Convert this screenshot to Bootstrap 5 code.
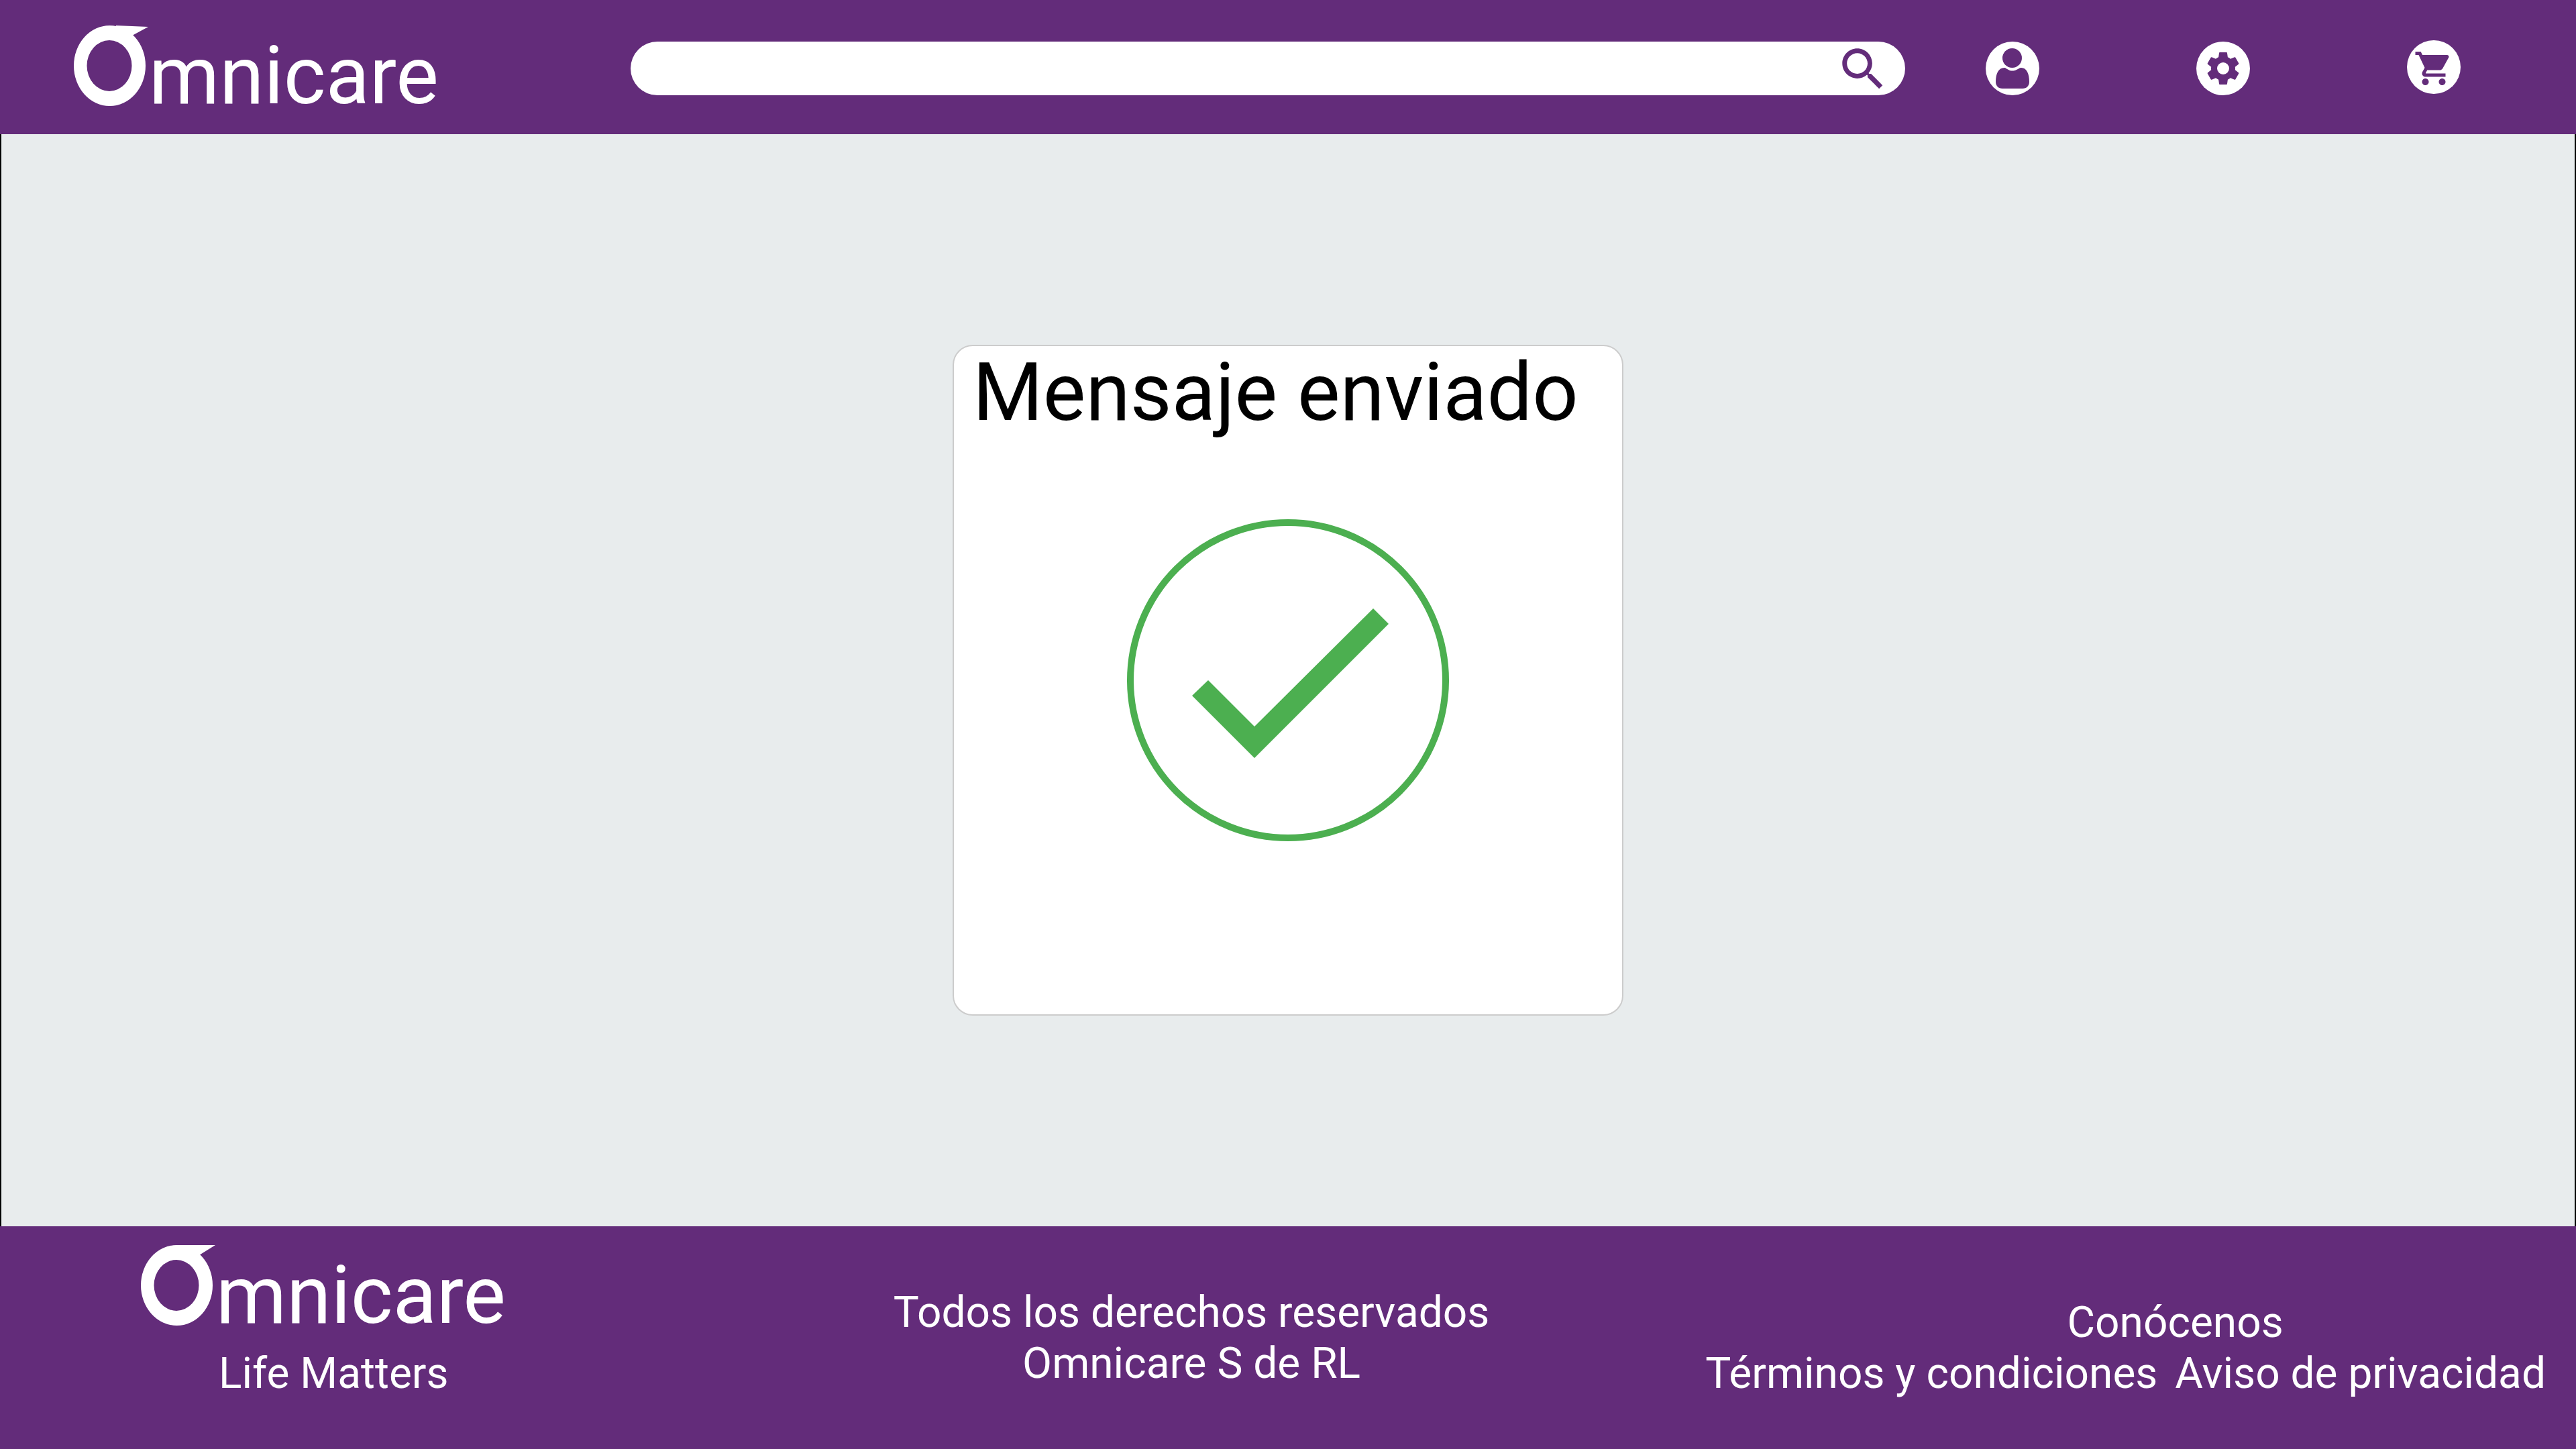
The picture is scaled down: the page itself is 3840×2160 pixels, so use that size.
<!DOCTYPE html>
<html lang="es">
<head>
<meta charset="utf-8">
<meta name="viewport" content="width=device-width, initial-scale=1">
<title>Omnicare - Mensaje enviado</title>
<link rel="stylesheet" href="https://cdn.jsdelivr.net/npm/bootstrap@5.3.0/dist/css/bootstrap.min.css">
<style>
  :root { --omni-purple: #632c7a; --omni-green: #4caf50; }
  body { font-family: Roboto, "Liberation Sans", sans-serif; background: #e8eced; }
  .omni-header { background: var(--omni-purple); min-height: 200px; padding: 38px 172px 0 110px; }
  .omni-brand { color: #fff; font-size: 120px; line-height: 140px; text-decoration: none; }
  .omni-brand svg { width: 112px; height: 120px; }
  .omni-brand span { padding-top: 5px; }
  .header-brand { width: 830px; }
  .header-tools { margin-top: 22px; gap: 120px; }
  .search-pill { background: #fff; height: 80px; padding: 0 24px 0 40px; }
  .search-pill input { font-size: 48px; line-height: 60px; }
  .search-pill button svg { width: 80px; height: 80px; display: block; }
  .icon-nav { gap: 234px; }
  .icon-nav svg { display: block; }
  .omni-main { border: solid #000; border-width: 0 2px; }
  .message-card { width: 1000px; min-height: 1000px; border: 2px solid #ccc; border-radius: 30px; }
  .message-card h1 { font-size: 120px; line-height: 138px; padding: 0 28px; color: #000; }
  .message-card svg { width: 480px; height: 480px; margin-top: 120px; }
  .omni-footer { background: var(--omni-purple); min-height: 332px; padding: 28px 45px 0 0; font-size: 64px; line-height: 76px; }
  .footer-brand { width: 1010px; padding-left: 210px; }
  .footer-brand p { padding: 9px 0 0 116px; }
  .footer-rights { padding-top: 63px; }
  .footer-links { padding-top: 78px; }
  .footer-links a { color: #fff; text-decoration: none; }
  .footer-about { padding-left: 148px; }
  .footer-legal { gap: 26px; }
</style>
</head>
<body class="min-vh-100 d-flex flex-column">

<header class="omni-header d-flex align-items-start">
  <div class="header-brand flex-shrink-0">
    <a class="omni-brand d-inline-flex align-items-start align-top" href="#" aria-label="Omnicare">
      <svg viewBox="0 0 112 120" fill="#fff" aria-hidden="true">
        <path fill-rule="evenodd" d="M53.500 0A53.500 60 0 1 0 53.500 120A53.500 60 0 1 0 53.500 0ZM53 22A33.500 38 0 1 1 53 98A33.500 38 0 1 1 53 22Z"/>
        <path d="M63 0L111 2L87 15L80 20L58 14Z"/>
      </svg>
      <span>mnicare</span>
    </a>
  </div>
  <div class="header-tools d-flex align-items-center flex-grow-1">
    <form class="search-pill rounded-pill d-flex align-items-center flex-grow-1" role="search">
      <input class="form-control border-0 bg-transparent shadow-none p-0" type="search" aria-label="Buscar">
      <button class="btn border-0 p-0" type="submit" aria-label="Buscar">
        <svg viewBox="0 0 80 80" aria-hidden="true">
          <path transform="translate(0 0) scale(3.430)" fill="#632c7a" d="M15.500 14h-.79l-.28-.27C15.410 12.590 16 11.110 16 9.500 16 5.910 13.090 3 9.500 3S3 5.910 3 9.500 5.910 16 9.500 16c1.610 0 3.090-.59 4.230-1.570l.27.28v.79l5 4.990L20.490 19l-4.990-5zm-6 0C7.010 14 5 11.990 5 9.500S7.010 5 9.500 5 14 7.010 14 9.500 11.990 14 9.500 14z"/>
        </svg>
      </button>
    </form>
    <nav class="icon-nav d-flex align-items-center" aria-label="Cuenta">
      <a href="#" aria-label="Perfil">
        <svg width="80" height="80" viewBox="0 0 80 80">
          <circle cx="40" cy="40" r="40" fill="#fff"/>
          <circle cx="39.500" cy="24.500" r="14.500" fill="#632c7a"/>
          <path fill="#632c7a" d="M28 39C30 39 31 41 34 42C37 44 42 44 46 42C49 41 50 39 53 39C61 39 65 48 65 60C65 66 61 70 55 70H25C19 70 15 66 15 60C15 48 19 39 28 39Z"/>
        </svg>
      </a>
      <a href="#" aria-label="Ajustes">
        <svg width="80" height="80" viewBox="0 0 80 80">
          <circle cx="40" cy="40" r="40" fill="#fff"/>
          <path transform="translate(11.200 11.200) scale(2.400)" fill="#632c7a" d="M19.430 12.980c.04-.32.07-.64.07-.98s-.03-.66-.07-.98l2.110-1.650c.19-.15.24-.42.12-.64l-2-3.460c-.12-.22-.39-.3-.61-.22l-2.490 1c-.52-.4-1.080-.73-1.690-.98l-.38-2.650C14.460 2.180 14.250 2 14 2h-4c-.25 0-.46.18-.49.42l-.38 2.650c-.61.25-1.170.59-1.690.98l-2.490-1c-.23-.09-.49 0-.61.22l-2 3.460c-.13.22-.07.49.12.64l2.110 1.650c-.04.32-.07.65-.07.98s.03.66.07.98l-2.110 1.650c-.19.15-.24.42-.12.64l2 3.460c.12.22.39.3.61.22l2.490-1c.52.4 1.080.73 1.690.98l.38 2.650c.03.24.24.42.49.42h4c.25 0 .46-.18.49-.42l.38-2.650c.61-.25 1.170-.59 1.690-.98l2.490 1c.23.09.49 0 .61-.22l2-3.460c.12-.22.07-.49-.12-.64l-2.110-1.650z"/>
          <circle cx="40" cy="40" r="9" fill="#fff"/>
        </svg>
      </a>
      <a href="#" aria-label="Carrito">
        <svg width="80" height="84" viewBox="0 0 80 84">
          <circle cx="40" cy="40" r="40" fill="#fff"/>
          <path transform="translate(10 12) scale(2.500)" fill="#632c7a" d="M7 18c-1.100 0-1.990.9-1.990 2S5.900 22 7 22s2-.9 2-2-.9-2-2-2zM1 2v2h2l3.600 7.590-1.350 2.450c-.16.28-.25.61-.25.96 0 1.100.9 2 2 2h12v-2H7.420c-.14 0-.25-.11-.25-.25l.03-.12.9-1.630h7.450c.75 0 1.410-.41 1.750-1.030l3.580-6.490c.08-.14.12-.31.12-.48 0-.55-.45-1-1-1H5.210l-.94-2H1zm16 16c-1.100 0-1.990.9-1.990 2s.89 2 1.990 2 2-.9 2-2-.9-2-2-2z"/>
        </svg>
      </a>
    </nav>
  </div>
</header>

<main class="omni-main flex-grow-1 d-flex align-items-center justify-content-center">
  <section class="message-card bg-white d-flex flex-column">
    <h1 class="fw-normal m-0">Mensaje enviado</h1>
    <svg class="align-self-center" viewBox="0 0 480 480" aria-hidden="true">
      <circle cx="240" cy="240" r="235" fill="none" stroke="#4caf50" stroke-width="10"/>
      <path fill="#4caf50" d="M97 263L121 240L190 309L367 133L390 156L190 356Z"/>
    </svg>
  </section>
</main>

<footer class="omni-footer text-white d-flex align-items-start">
  <div class="footer-brand flex-shrink-0">
    <a class="omni-brand d-inline-flex align-items-start align-top" href="#" aria-label="Omnicare">
      <svg viewBox="0 0 112 120" fill="#fff" aria-hidden="true">
        <path fill-rule="evenodd" d="M53.500 0A53.500 60 0 1 0 53.500 120A53.500 60 0 1 0 53.500 0ZM53 22A33.500 38 0 1 1 53 98A33.500 38 0 1 1 53 22Z"/>
        <path d="M53 0H111L87 15L80 20L53 14Z"/>
      </svg>
      <span>mnicare</span>
    </a>
    <p class="m-0">Life Matters</p>
  </div>
  <div class="footer-rights flex-grow-1 text-center">
    Todos los derechos reservados<br>Omnicare S de RL
  </div>
  <nav class="footer-links text-center" aria-label="Enlaces">
    <div class="footer-about"><a href="#">Conócenos</a></div>
    <div class="footer-legal d-flex"><a href="#">Términos y condiciones</a><a href="#">Aviso de privacidad</a></div>
  </nav>
</footer>

<script src="https://cdn.jsdelivr.net/npm/bootstrap@5.3.0/dist/js/bootstrap.bundle.min.js"></script>
</body>
</html>
